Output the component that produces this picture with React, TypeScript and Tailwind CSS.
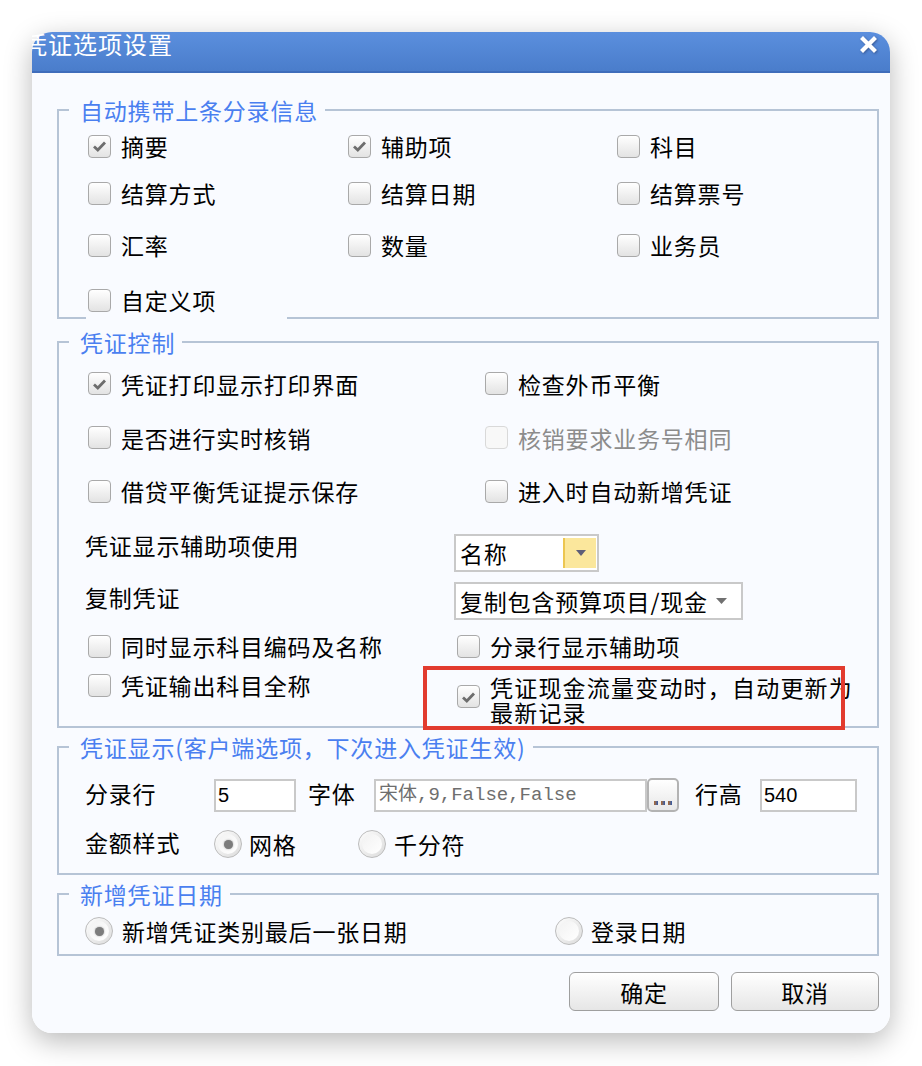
import React from 'react';

const Check: React.FC<{ checked?: boolean; disabled?: boolean }> = ({ checked, disabled }) => (
  <span
    className={`flex h-[23px] w-[23px] shrink-0 items-center justify-center rounded-[4px] border ${
      disabled
        ? 'border-[#d9d9d9] bg-[#f8f8f8]'
        : 'border-[#a9a9a9] bg-linear-to-b from-white to-[#e3e3e3]'
    }`}
  >
    {checked && (
      <svg width="15" height="12" viewBox="0 0 15 12">
        <path d="M2 6.5 L5.8 10 L13 2.5" stroke="#6d6d6d" strokeWidth="2.8" fill="none" />
      </svg>
    )}
  </span>
);

const Radio: React.FC<{ checked?: boolean }> = ({ checked }) => (
  <span className="flex h-[28px] w-[28px] shrink-0 items-center justify-center rounded-full border border-[#bcbcbc] bg-linear-to-br from-[#fdfdfd] to-[#dcdcdc]">
    <span className="flex h-[20px] w-[20px] items-center justify-center rounded-full bg-linear-to-br from-[#f2f2f2] to-white">
      {checked && <span className="h-[9px] w-[9px] rounded-full bg-[#7c7c7c] shadow-[0_0_2px_#9a9a9a]" />}
    </span>
  </span>
);

const Item: React.FC<{ label: string; checked?: boolean; disabled?: boolean }> = ({
  label,
  checked,
  disabled,
}) => (
  <div className="flex items-center gap-[10px]">
    <Check checked={checked} disabled={disabled} />
    <span className={disabled ? 'text-[#8c8c8c]' : 'text-black'}>{label}</span>
  </div>
);

const Legend: React.FC<{ children: React.ReactNode }> = ({ children }) => (
  <legend className="ml-[10px] pl-[11px] pr-[7px] text-[23px] leading-[28px] tracking-[0.8px] text-[#4a7ff0]">
    {children}
  </legend>
);

export default function App() {
  return (
    <div className="min-h-[1066px] bg-white pl-[32px] pt-[32px] font-['Noto_Sans_CJK_SC','Liberation_Sans',sans-serif] text-[23px] leading-[28px] tracking-[0.8px] text-black">
      <div className="flex h-[1001px] w-[858px] flex-col rounded-[20px] shadow-[0_8px_28px_rgba(0,0,0,0.28)]">
        {/* title bar */}
        <div className="flex h-[41px] shrink-0 items-start rounded-t-[20px] border-b-2 border-[#3f6dbb] bg-linear-to-b from-[#5b8fde] to-[#4a7dcb]">
          <div className="w-[160px] overflow-hidden">
            <div className="-ml-[9px] whitespace-nowrap text-[24px] leading-[24px] tracking-[1px] text-white">
              凭证选项设置
            </div>
          </div>
          <svg
            className="ml-auto mr-[13px] mt-[4px] drop-shadow-[1px_1px_1px_rgba(40,60,110,0.6)]"
            width="17"
            height="17"
            viewBox="0 0 17 17"
          >
            <path d="M3 3 L14 14 M14 3 L3 14" stroke="white" strokeWidth="4.2" strokeLinecap="square" />
          </svg>
        </div>

        {/* body */}
        <div className="flex flex-1 flex-col rounded-b-[20px] bg-[#f9fbff] pl-[25px] pr-[11px] pt-[23px]">
          {/* group 1 */}
          <fieldset className="border-2 border-[#b6c4d6]">
            <Legend>自动携带上条分录信息</Legend>
            <div className="pl-[29px]">
              <div className="grid grid-cols-[260px_269px_1fr]">
                <div className="flex h-[44px] items-center"><Item label="摘要" checked /></div>
                <div className="flex h-[44px] items-center"><Item label="辅助项" checked /></div>
                <div className="flex h-[44px] items-center"><Item label="科目" /></div>
                <div className="flex h-[50px] items-center"><Item label="结算方式" /></div>
                <div className="flex h-[50px] items-center"><Item label="结算日期" /></div>
                <div className="flex h-[50px] items-center"><Item label="结算票号" /></div>
                <div className="flex h-[54px] items-center"><Item label="汇率" /></div>
                <div className="flex h-[54px] items-center"><Item label="数量" /></div>
                <div className="flex h-[54px] items-center"><Item label="业务员" /></div>
              </div>
              <div className="-mb-[2px] -ml-[2px] mt-[9px] flex h-[38px] w-[201px] items-center bg-[#f9fbff] pl-[2px]">
                <Item label="自定义项" />
              </div>
            </div>
          </fieldset>

          {/* group 2 */}
          <fieldset className="mt-[9px] border-2 border-[#b6c4d6] pb-[1px]">
            <Legend>凭证控制</Legend>
            <div className="pl-[29px]">
              <div className="grid grid-cols-[397px_1fr]">
                <div className="flex h-[55px] items-center"><Item label="凭证打印显示打印界面" checked /></div>
                <div className="flex h-[55px] items-center"><Item label="检查外币平衡" /></div>
                <div className="flex h-[53px] items-center"><Item label="是否进行实时核销" /></div>
                <div className="flex h-[53px] items-center"><Item label="核销要求业务号相同" disabled /></div>
                <div className="flex h-[54px] items-center"><Item label="借贷平衡凭证提示保存" /></div>
                <div className="flex h-[54px] items-center"><Item label="进入时自动新增凭证" /></div>
              </div>

              <div className="grid grid-cols-[366px_1fr] items-start">
                <div className="-ml-[3px] mt-[13px]">凭证显示辅助项使用</div>
                <div className="mt-[16px] flex h-[38px] w-[145px] items-center border-2 border-[#c9c9c9] bg-white pl-[4px] pr-[1px]">
                  <span className="flex-1">名称</span>
                  <span className="flex h-[30px] w-[33px] items-center justify-center border-l-2 border-[#ecc651] bg-[#fbe79c]">
                    <svg width="10" height="6" viewBox="0 0 10 6">
                      <path d="M0 0 H10 L5 6 Z" fill="#5e5e78" />
                    </svg>
                  </span>
                </div>
                <div className="-ml-[3px] mt-[11px]">复制凭证</div>
                <div className="mt-[10px] flex h-[38px] w-[289px] items-center border-2 border-[#c9c9c9] bg-white pl-[4px]">
                  <span className="flex-1 whitespace-nowrap">复制包含预算项目/现金</span>
                  <svg className="mr-[14px]" width="11" height="6" viewBox="0 0 11 6">
                    <path d="M0 0 H11 L5.5 6 Z" fill="#707070" />
                  </svg>
                </div>
                <div className="flex h-[52px] items-center"><Item label="同时显示科目编码及名称" /></div>
                <div className="ml-[3px] flex h-[52px] items-center"><Item label="分录行显示辅助项" /></div>
                <div className="flex h-[26px] items-center">
                  <Item label="凭证输出科目全称" />
                </div>
                <div className="relative">
                  <div className="ml-[3px] mt-[3px] flex items-start gap-[10px]">
                    <span className="mt-[10px]"><Check checked /></span>
                    <span className="whitespace-nowrap leading-[25px] tracking-[1.2px]">
                      凭证现金流量变动时，自动更新为
                      <br />
                      最新记录
                    </span>
                  </div>
                  <div className="pointer-events-none absolute -left-[31px] -top-[6px] h-[64px] w-[422px] border-4 border-[#e23b2e]" />
                </div>
              </div>
            </div>
          </fieldset>

          {/* group 3 */}
          <fieldset className="mt-[5px] border-2 border-[#b6c4d6] pb-[11px]">
            <Legend>凭证显示(客户端选项，下次进入凭证生效)</Legend>
            <div className="pl-[26px]">
              <div className="mt-[17px] flex h-[34px] items-center">
                <span className="-mt-[4px] w-[129px]">分录行</span>
                <div className="flex h-[33px] w-[82px] items-center border-2 border-[#c9c9c9] bg-white pl-[2px] font-['Liberation_Sans',sans-serif] text-[20px] tracking-normal">
                  5
                </div>
                <span className="-mt-[4px] ml-[12px] w-[66px]">字体</span>
                <div className="flex h-[33px] w-[273px] items-center border-2 border-[#c9c9c9] bg-white pl-[3px] font-['Liberation_Mono','Noto_Sans_CJK_SC',monospace] text-[19px] tracking-normal text-[#6e6e6e]">
                  宋体,9,False,False
                </div>
                <div className="flex h-[34px] w-[32px] items-end justify-center gap-[3px] rounded-[5px] border-2 border-[#b3b3b3] bg-linear-to-b from-white to-[#e8e8e8] pb-[5px]">
                  <span className="h-[4px] w-[4px] bg-linear-to-r from-[#b0681e] to-[#2a56a6]" />
                  <span className="h-[4px] w-[4px] bg-linear-to-r from-[#b0681e] to-[#2a56a6]" />
                  <span className="h-[4px] w-[4px] bg-linear-to-r from-[#b0681e] to-[#2a56a6]" />
                </div>
                <span className="-mt-[4px] ml-[16px] w-[65px]">行高</span>
                <div className="flex h-[33px] w-[97px] items-center border-2 border-[#c9c9c9] bg-white pl-[2px] font-['Liberation_Sans',sans-serif] text-[20px] tracking-normal">
                  540
                </div>
              </div>
              <div className="mt-[14px] flex h-[36px] items-center">
                <span className="-mt-[4px] w-[129px]">金额样式</span>
                <div className="flex w-[144px] items-center gap-[7px]">
                  <Radio checked />
                  <span>网格</span>
                </div>
                <div className="flex items-center gap-[8px]">
                  <Radio />
                  <span>千分符</span>
                </div>
              </div>
            </div>
          </fieldset>

          {/* group 4 */}
          <fieldset className="mt-[5px] border-2 border-[#b6c4d6]">
            <Legend>新增凭证日期</Legend>
            <div className="flex h-[46px] items-center pl-[26px]">
              <div className="flex w-[470px] items-center gap-[9px]">
                <Radio checked />
                <span>新增凭证类别最后一张日期</span>
              </div>
              <div className="flex items-center gap-[8px]">
                <Radio />
                <span>登录日期</span>
              </div>
            </div>
          </fieldset>

          {/* buttons */}
          <div className="mt-[16px] flex justify-end gap-[12px]">
            <button className="h-[39px] w-[150px] rounded-[6px] border border-[#9f9f9f] bg-linear-to-b from-white to-[#e6e6e6] text-[23px] leading-[28px]">
              确定
            </button>
            <button className="h-[39px] w-[148px] rounded-[6px] border border-[#9f9f9f] bg-linear-to-b from-white to-[#e6e6e6] text-[23px] leading-[28px]">
              取消
            </button>
          </div>
        </div>
      </div>
    </div>
  );
}
